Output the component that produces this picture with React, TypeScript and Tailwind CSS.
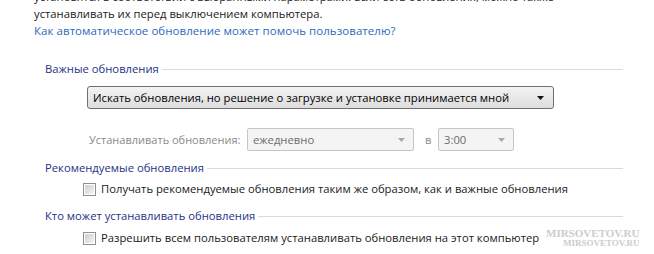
function Heading({ children }: { children: string }) {
  return (
    <div className="flex h-4 items-center pl-[45px] pr-[31px] text-[#1e3287]">
      <span className="whitespace-nowrap">{children}</span>
      <div className="ml-[3px] h-px flex-1 bg-[#d4dbe1]" />
    </div>
  );
}

function Checkbox({ label }: { label: string }) {
  return (
    <div className="flex h-4 items-center pl-[83px]">
      <div className="flex h-[13px] w-[13px] items-center justify-center border border-[#8f8f8f] bg-white">
        <div className="h-[9px] w-[9px] bg-gradient-to-br from-[#cbcfd5] to-[#f4f4f4]" />
      </div>
      <span className="ml-[5px] whitespace-nowrap text-[#1a1a1a]">{label}</span>
    </div>
  );
}

function DisabledCombo({ value, w }: { value: string; w: string }) {
  return (
    <div className={`flex h-[23px] items-center justify-between rounded-[2px] border border-[#c6c6c6] bg-[#f4f4f4] pl-[5px] pr-[8px] text-[#6d6d6d] ${w}`}>
      <span>{value}</span>
      <svg width="7" height="4" viewBox="0 0 7 4">
        <path d="M0 0h7L3.5 4z" fill="#a8a8a8" />
      </svg>
    </div>
  );
}

export default function App() {
  return (
    <div className="relative h-[254px] w-[654px] overflow-hidden bg-white font-['Open_Sans',sans-serif] text-[11.25px] leading-4">
      <div className="-mt-[10px] pl-[34px] text-[#1a1a1a]">
        <div className="h-4 whitespace-nowrap leading-[13px]">
          установятся в соответствии с выбранными параметрами. Если есть обновления, можно также
        </div>
        <div className="h-4 whitespace-nowrap">устанавливать их перед выключением компьютера.</div>
        <div className="mt-px h-4 whitespace-nowrap text-[11.5px] tracking-[0.05px] text-[#2b6bbd]">
          Как автоматическое обновление может помочь пользователю?
        </div>
      </div>

      <div className="mt-[22px]">
        <Heading>Важные обновления</Heading>
      </div>

      <div className="mt-[9px] pl-[87px]">
        <div className="flex h-[23px] w-[467px] items-center justify-between rounded-[3px] border border-[#707070] bg-gradient-to-b from-[#f3f3f3] to-[#dddddd] pl-[5px] pr-[9px] text-black">
          <span className="whitespace-nowrap">
            Искать обновления, но решение о загрузке и установке принимается мной
          </span>
          <svg width="7" height="4" viewBox="0 0 7 4">
            <path d="M0 0h7L3.5 4z" fill="#111" />
          </svg>
        </div>
      </div>

      <div className="mt-[19px] flex items-center pl-[89px]">
        <span className="w-[158px] whitespace-nowrap text-[11px] text-[#8a8a8a]">Устанавливать обновления:</span>
        <DisabledCombo value="ежедневно" w="w-[167px]" />
        <span className="ml-[11px] w-[13px] text-[#8a8a8a]">в</span>
        <DisabledCombo value="3:00" w="w-[76px]" />
      </div>

      <div className="mt-[9px]">
        <Heading>Рекомендуемые обновления</Heading>
      </div>
      <div className="mt-[5px]">
        <Checkbox label="Получать рекомендуемые обновления таким же образом, как и важные обновления" />
      </div>

      <div className="mt-[11px]">
        <Heading>Кто может устанавливать обновления</Heading>
      </div>
      <div className="mt-[6px]">
        <Checkbox label="Разрешить всем пользователям устанавливать обновления на этот компьютер" />
      </div>

      <div className="absolute left-[546px] top-[228px] flex flex-col items-end font-['Liberation_Serif',serif] text-[11px] font-bold leading-[11px] text-[#c4c8cc] opacity-90">
        <span>MIRSOVETOV.RU</span>
        <span className="-mt-[1px] text-[9px]">MIRSOVETOV.RU</span>
      </div>
    </div>
  );
}
